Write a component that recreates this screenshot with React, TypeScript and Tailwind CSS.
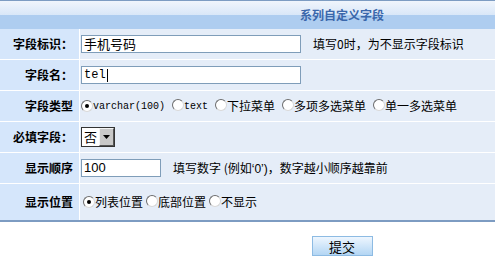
import type { ReactNode } from 'react';

const CJK = "font-['Noto_Sans_CJK_SC',sans-serif]";

function Radio({ checked = false }: { checked?: boolean }) {
  return (
    <span className="relative inline-flex h-[12px] w-[12px] shrink-0 items-center justify-center rounded-full border border-t-[#6d6d6d] border-l-[#6d6d6d] border-r-[#d8d8d8] border-b-[#d8d8d8] bg-white">
      {checked && <span className="h-[4px] w-[4px] rounded-full bg-black" />}
    </span>
  );
}

function Row({ label, tall, children }: { label: string; tall?: boolean; children: ReactNode }) {
  return (
    <>
      <div className={`flex items-center justify-end bg-[#d5e6fb] pr-[6px] text-[12px] font-bold text-black ${tall ? 'h-[36px]' : 'h-[30px]'}`}>
        {label}
      </div>
      <div className="flex items-center bg-[#e5edf8] pl-[1px] text-[12px] text-black">{children}</div>
    </>
  );
}

export default function App() {
  return (
    <div className={`h-[256px] w-[495px] overflow-hidden bg-white ${CJK}`}>
      <div className="w-[684px]">
        <div className="border-t border-[#7d9cc2]">
          <div className="h-[14px] bg-gradient-to-b from-[#f0f5fc] to-[#d9e7f8]" />
          <div className="relative h-[14px] bg-[#aecdf0]">
            <span className="absolute left-0 right-0 top-[-9px] text-center text-[12px] font-bold text-[#3a67ab]">
              系列自定义字段
            </span>
          </div>
        </div>

        <div className="grid grid-cols-[79px_1fr] gap-px bg-white">
          <Row label="字段标识：">
            <div className="flex h-[18px] w-[220px] items-center border border-[#7f9db9] bg-white px-[2px] text-[13px]">
              手机号码
            </div>
            <span className="ml-[12px]">填写0时，为不显示字段标识</span>
          </Row>
          <Row label="字段名：">
            <div className="flex h-[18px] w-[220px] items-center border border-[#7f9db9] bg-white px-[2px] font-['Liberation_Mono',monospace] text-[12px]">
              tel<span className="ml-[1px] h-[13px] w-px bg-black" />
            </div>
          </Row>
          <Row label="字段类型">
            <div className="flex items-center">
              <Radio checked />
              <span className="font-['Liberation_Mono',monospace] text-[10px]">varchar(100)</span>
              <span className="ml-[7px]"><Radio /></span>
              <span className="font-['Liberation_Mono',monospace] text-[10px]">text</span>
              <span className="ml-[7px]"><Radio /></span>
              <span>下拉菜单</span>
              <span className="ml-[7px]"><Radio /></span>
              <span>多项多选菜单</span>
              <span className="ml-[7px]"><Radio /></span>
              <span>单一多选菜单</span>
            </div>
          </Row>
          <Row label="必填字段：">
            <div className="flex h-[20px] w-[34px] border border-[#333] bg-white">
              <span className="flex flex-1 items-center justify-center text-[13px]">否</span>
              <span className="flex w-[15px] items-center justify-center border border-t-[#f4f4f4] border-l-[#f4f4f4] border-r-[#555] border-b-[#555] bg-[#c8c8c8]">
                <svg width="7" height="4" viewBox="0 0 7 4">
                  <path d="M0 0h7L3.5 4z" fill="#000" />
                </svg>
              </span>
            </div>
          </Row>
          <Row label="显示顺序">
            <div className="flex h-[18px] w-[80px] items-center border border-[#7f9db9] bg-white px-[2px] font-['Liberation_Sans',sans-serif] text-[13px]">
              100
            </div>
            <span className="ml-[12px]">
              填写数字 (例如<span className="font-['Liberation_Sans',sans-serif]">‘0’)</span>，数字越小顺序越靠前
            </span>
          </Row>
          <Row label="显示位置" tall>
            <div className="ml-[2px] flex items-center">
              <Radio checked />
              <span>列表位置</span>
              <span className="ml-[3px]"><Radio /></span>
              <span>底部位置</span>
              <span className="ml-[3px]"><Radio /></span>
              <span>不显示</span>
            </div>
          </Row>
        </div>
        <div className="h-[2px] bg-[#7d9cc2]" />

        <div className="flex justify-center pt-[14px]">
          <button
            type="button"
            className="h-[20px] w-[61px] border border-[#8dbbe3] bg-gradient-to-b from-[#eef6fe] to-[#b3d6f4] text-[13px] leading-none text-black"
          >
            提交
          </button>
        </div>
      </div>
    </div>
  );
}
